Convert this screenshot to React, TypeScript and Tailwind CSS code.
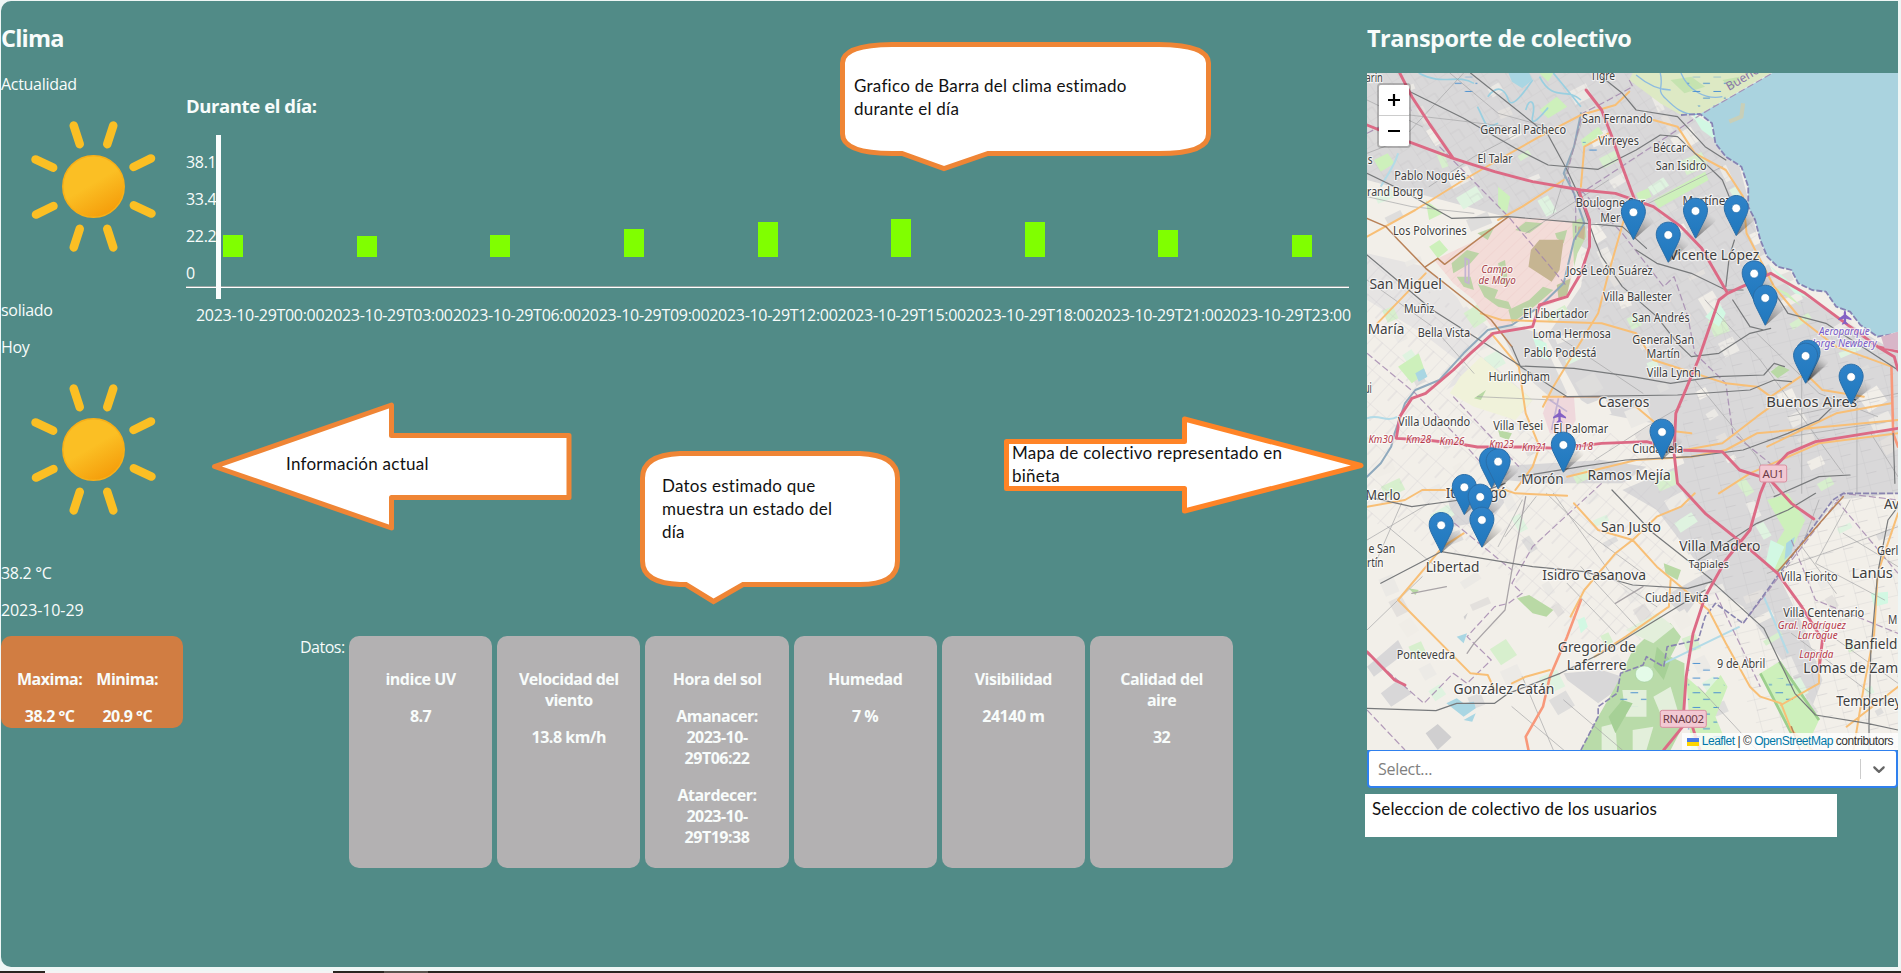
import React from "react";

/* The map is drafted on a 1568-unit-wide sheet: 2.898 units per pixel across, 3 units per pixel down. */
const SX = 2.898;
const SY = 3;
const px = (u: number) => (u - 20) / SX;
const py = (v: number) => (v - 219) / SY;

type Label = [text: string, u0: number, u1: number, v: number, size: number, kind?: "road" | "mil" | "air"];

const labels: Label[] = [
  ["Tigre", 668, 739, 239, 12],
  ["arín", 16, 66, 246, 12],
  ["San Fernando", 643, 848, 368, 12],
  ["General Pacheco", 348, 597, 403, 12],
  ["Virreyes", 690, 808, 436, 12],
  ["Béccar", 849, 945, 455, 12],
  ["El Talar", 340, 442, 490, 12],
  ["San Isidro", 857, 1004, 510, 12],
  ["s", 22, 36, 493, 12],
  ["Pablo Nogués", 99, 306, 539, 12],
  ["rand Bourg", 20, 183, 588, 12],
  ["Boulogne Sur", 625, 826, 622, 12],
  ["Mer", 696, 754, 665, 12],
  ["Martínez", 934, 1074, 614, 12],
  ["Los Polvorines", 95, 309, 704, 12],
  ["Campo", 351, 443, 818, 11.5, "mil"],
  ["de Mayo", 343, 451, 853, 11.5, "mil"],
  ["Vicente López", 896, 1157, 780, 15],
  ["José León Suárez", 598, 848, 825, 12],
  ["San Miguel", 27, 237, 866, 15],
  ["Villa Ballester", 704, 903, 904, 12],
  ["Muñiz", 127, 215, 940, 12],
  ["El Libertador", 472, 662, 954, 12],
  ["San Andrés", 788, 955, 966, 12],
  ["María", 22, 128, 1002, 15],
  ["Bella Vista", 167, 319, 1010, 12],
  ["Loma Hermosa", 500, 727, 1015, 12],
  ["General San", 789, 968, 1031, 12],
  ["Martín", 830, 927, 1075, 12],
  ["Pablo Podestá", 474, 685, 1072, 12],
  ["Villa Lynch", 831, 987, 1132, 12],
  ["Hurlingham", 372, 550, 1144, 12],
  ["Aeroparque", 1330, 1477, 1005, 11, "air"],
  ["Jorge Newbery", 1310, 1497, 1041, 11, "air"],
  ["ui", 12, 34, 1180, 15],
  ["Caseros", 690, 838, 1222, 15],
  ["Buenos Aires", 1177, 1440, 1222, 15],
  ["Villa Udaondo", 110, 319, 1278, 12],
  ["Villa Tesei", 386, 530, 1289, 12],
  ["El Palomar", 560, 719, 1298, 12],
  ["Km30", 24, 96, 1328, 10.5, "road"],
  ["Km28", 133, 206, 1328, 10.5, "road"],
  ["Km26", 230, 302, 1336, 10.5, "road"],
  ["Km23", 374, 446, 1345, 10.5, "road"],
  ["Km21", 469, 540, 1352, 10.5, "road"],
  ["Km18", 600, 675, 1349, 10.5, "road"],
  ["Ciudadela", 789, 936, 1358, 12],
  ["Ramos Mejía", 659, 900, 1441, 15],
  ["Morón", 467, 590, 1452, 15],
  ["Ituzaingó", 248, 425, 1494, 15],
  ["Merlo", 16, 117, 1501, 15],
  ["Av", 1518, 1562, 1527, 15],
  ["San Justo", 698, 872, 1596, 15],
  ["Villa Madero", 925, 1160, 1652, 15],
  ["Tapiales", 952, 1069, 1705, 11.5],
  ["Gerl", 1498, 1560, 1666, 12],
  ["Villa Fiorito", 1218, 1384, 1742, 12],
  ["Lanús", 1424, 1544, 1734, 15],
  ["e San", 24, 102, 1658, 12],
  ["rtín", 20, 68, 1700, 12],
  ["Libertad", 190, 346, 1717, 15],
  ["Isidro Casanova", 528, 829, 1740, 15],
  ["Ciudad Evita", 826, 1010, 1805, 12],
  ["Villa Centenario", 1226, 1461, 1850, 12],
  ["M", 1530, 1557, 1873, 12],
  ["Gral. Rodríguez", 1210, 1408, 1886, 10.5, "road"],
  ["Larroque", 1268, 1384, 1918, 10.5, "road"],
  ["Laprida", 1273, 1372, 1973, 10.5, "road"],
  ["Banfield", 1404, 1557, 1948, 15],
  ["Lomas de Zam", 1284, 1559, 2019, 15],
  ["Pontevedra", 106, 275, 1976, 12],
  ["Gregorio de", 573, 799, 1956, 15],
  ["Laferrere", 599, 772, 2010, 15],
  ["9 de Abril", 1034, 1174, 2005, 12],
  ["González Catán", 271, 563, 2083, 15],
  ["Temperley", 1380, 1568, 2118, 15],
];

const labelFill = { road: "#b5394a", mil: "#a8444c", air: "#7a5cc8", town: "#3f3f3f" };

const pins: [number, number][] = [
  [792, 720], [972, 716], [1090, 708], [893, 788], [1142, 904], [1174, 977],
  [1298, 1142], [1291, 1151], [1423, 1214], [875, 1379], [589, 1418],
  [381, 1465], [400, 1468], [302, 1545], [348, 1574], [353, 1643], [235, 1659],
];

const hashes = Array.from({ length: 190 }, (_, i) => ({
  u: 20 + ((i * 977) % 1500),
  v: 240 + ((i * 1531) % 1960),
  w: 20 + ((i * 37) % 50),
  h: 14 + ((i * 53) % 45),
  r: -34 + ((i * 13) % 14),
  c: ["#f2efe9", "#ebe9e5", "#e3e0dd", "#f0ede7", "#d7efcd", "#eceae6", "#dff3e0", "#dedddc"][i % 8],
}));

function Strokes({ d, c, w, dash, o = 1 }: { d: string; c: string; w: number; dash?: string; o?: number }) {
  return (
    <path d={d} fill="none" stroke={c} strokeWidth={w} strokeOpacity={o} strokeDasharray={dash} strokeLinejoin="round" strokeLinecap={dash ? "butt" : "round"} vectorEffect="non-scaling-stroke" />
  );
}

function MapTerrain() {
  return (
    <svg className="absolute inset-0 h-full w-full" viewBox="20 219 1539 2031" preserveAspectRatio="none">
      <defs>
        <pattern id="streets" width="58" height="64" patternUnits="userSpaceOnUse" patternTransform="rotate(-33)">
          <path d="M0 0H58M0 32H29M0 0V64M29 32V64" stroke="#bdbbbf" strokeWidth="1.5" fill="none" />
        </pattern>
        <pattern id="streets2" width="64" height="80" patternUnits="userSpaceOnUse" patternTransform="rotate(42)">
          <path d="M0 0H64M0 0V80M32 0V40" stroke="#c6c4c8" strokeWidth="1.6" fill="none" />
        </pattern>
        <pattern id="streets3" width="60" height="68" patternUnits="userSpaceOnUse" patternTransform="rotate(-14)">
          <path d="M0 0H60M0 0V68M0 34H30" stroke="#bab8bc" strokeWidth="1.5" fill="none" />
        </pattern>
        <pattern id="range" width="26" height="26" patternUnits="userSpaceOnUse" patternTransform="rotate(45)">
          <path d="M0 0V26" stroke="#eac6c4" strokeWidth="3" />
        </pattern>
        <pattern id="marsh" width="60" height="44" patternUnits="userSpaceOnUse">
          <path d="M4 10H26M34 30H54" stroke="#4a90d0" strokeWidth="3" />
        </pattern>
      </defs>
      <rect x="20" y="219" width="1539" height="2031" fill="#f2efe9" />

      {/* built-up areas */}
      <path d="M20 219H790L1000 380L1100 500L1150 700L1200 830L1400 960L1559 1060V1480L1380 1500L1210 1720L1290 1890L1340 2040L1310 2120L1230 1990L1110 1820L1010 1750L940 1850L880 1790L1000 1720L860 1530L760 1470L940 1390L900 1280L700 1240L640 1200L540 1010L640 860L660 750L560 690L420 650L20 540Z" fill="#d9d8d9" />
      <path d="M20 760L190 800L370 980L250 1170L380 1090L500 1200L470 1240L330 1120L180 1000L20 900Z" fill="#e6e4e3" />
      <path d="M390 960L520 1000L600 1180L560 1200L470 1120Z M30 300L100 380L60 440L20 420Z" fill="#dcdbdb" />
      <path d="M380 1400L700 1380L830 1400L760 1450H520L420 1440Z M250 1470L330 1450L430 1490L380 1560L270 1580Z M590 2020L700 2010L760 2030L730 2080L690 2110L600 2040Z M20 2000L110 1920L130 1960L40 2030Z M60 2080L110 2040L150 2080L90 2120Z M1080 820L1200 850L1150 900Z" fill="#d8d7d8" />
      {hashes.map((h, i) => (
        <rect key={i} x={h.u} y={h.v} width={h.w} height={h.h} fill={h.c} transform={`rotate(${h.r} ${h.u} ${h.v})`} />
      ))}
      <path d="M20 219H790L1000 380L1150 700L1060 1100L900 1120L640 900V740L430 640L20 540Z" fill="url(#streets)" opacity=".7" />
      <path d="M20 760L370 980L480 1300L840 1300L930 1500L900 1850L760 1960L540 1880L440 1730L20 1560Z" fill="url(#streets2)" opacity=".85" />
      <path d="M1050 850L1200 860L1559 1060V2250H1180L960 1700L930 1150Z" fill="url(#streets3)" opacity=".75" />

      {/* green areas */}
      <g fill="#cdf0bb">
        <path d="M520 330L570 290L600 320L545 355Z M40 480L80 460L100 490L60 515Z M520 220L560 219L545 245Z M640 420L690 380L705 400L645 440Z M850 600L1000 515L1010 540L865 625Z M800 580L835 565L845 590L810 605Z" />
        <path d="M190 600L240 640L200 660Z M110 1100L170 1060L190 1120L150 1150Z M1180 850L1240 880L1280 920L1210 870Z M1180 1500L1240 1480L1290 1560L1220 1720L1170 1690L1230 1590Z M400 560L435 590L425 640L400 620Z M200 740L230 720L255 750L225 775Z" />
        <path d="M1160 2020L1215 1985L1330 2160L1290 2250L1250 2200Z M945 2030L1000 2080L1045 2025L1065 2060L1030 2150L1070 2250H960Z" />
      </g>
      <path d="M290 1130L350 1070L430 1140L500 1200L450 1260L330 1220L260 1180Z" fill="#f0f2da" />
      <path d="M1215 1985L1330 2160M1160 2020L1250 2200" stroke="#9ccf8d" strokeWidth="8" />
      <path d="M1000 950L1040 910L1060 940L1040 980Z M630 1860L650 1850L660 1880L640 1900Z M1190 1620L1230 1640L1200 1710L1175 1690Z M960 340L1015 370L1030 420L990 390Z M1180 790L1250 850L1320 900L1260 880Z M1480 1780L1530 1775V1810L1490 1820Z M500 1010L540 1030L545 1080L520 1070Z" fill="#d2f8e3" />
      <path d="M1190 1115L1215 1095L1245 1110L1210 1135Z M400 1290L440 1300L430 1320L405 1310Z M455 1795L490 1785L560 1830L540 1850L500 1840Z M880 1690L930 1710L920 1740L885 1720Z M140 1765L170 1770L160 1785Z M330 1195L365 1170L350 1200Z" fill="#b9d9a5" />
      <path d="M640 2250L690 2150L740 2060L790 1950L860 1880L900 1870L930 1910L900 1970L940 1990L940 2170L900 2250Z" fill="#b9dba9" />
      <path d="M770 1890L860 1840L910 1880L850 1930Z M760 2070H830V2150H770Z M850 2090L900 2060L920 2130L870 2140Z M700 2180L740 2170L745 2250H700Z M790 2190L850 2180L830 2250H790Z" fill="#e3efdb" />
      <path d="M720 2150L760 2100L790 2110L740 2200Z M860 1940L900 1980L880 2040L850 2000Z" fill="#a6d096" />
      <ellipse cx="824" cy="2022" rx="26" ry="24" fill="#e4fbe8" stroke="#8cbf8c" />
      <path d="M950 1920L1060 2060L1030 2150L1060 2250H950Z M1180 2040L1260 2030V2100H1200Z M750 2060H830V2120H750Z" fill="url(#marsh)" />
      <path d="M190 2200L225 2172L265 2212L225 2250Z M300 1850L312 1838L304 1860Z" fill="#d0cfd0" />

      {/* Campo de Mayo */}
      <path d="M215 780L340 719L430 652L520 655L620 665L625 740L610 850L560 910L500 930L440 975L380 980L330 900L270 850Z" fill="#f3dcd8" />
      <path d="M215 780L340 719L430 652L520 655L620 665L625 740L610 850L560 910L500 930L440 975L380 980L330 900L270 850Z" fill="url(#range)" opacity=".6" />
      <path d="M265 790L310 750L345 760L320 790L270 820Z M280 830L320 830L330 870L300 860Z M340 700L390 680L370 720Z M340 850L400 870L390 895L430 905L440 930L400 920L360 890Z M430 930L490 900L530 860L560 870L510 915L440 970Z M450 690L480 665L530 670L490 700Z M565 700L600 690L590 730L570 715Z M400 790L420 780L430 860L410 850Z" fill="#bdd3a6" />
      <path d="M615 665L650 650L655 710L630 760L620 800Z" fill="#c3dcae" />
      <path d="M632 680L652 678L650 720L630 710Z M520 719H590L578 810L555 845L488 800L495 750Z" fill="#c6b592" />
      <path d="M570 855L610 835L600 885L575 895Z" fill="#bfc59a" />
      <path d="M545 1190L620 1190L625 1260L600 1310L550 1300L530 1240Z" fill="#efd8dc" />
      <path d="M550 1200L600 1235M575 1195L555 1290M305 775L315 780V850L305 845Z" stroke="#c4b4d2" strokeWidth="5" fill="none" />

      {/* water */}
      <path d="M790 219H1190L985 342L930 345L870 310L780 240Z" fill="#dde9c4" />
      <path d="M900 240L940 280L1000 260L960 230Z M1050 240L1100 230L1080 270Z" fill="#c5e3b0" />
      <path d="M870 219C880 260 860 270 880 290S930 350 985 342M800 225C840 260 870 270 900 270M930 219C950 270 1000 300 1050 290" stroke="#8dbbe0" strokeWidth="4" fill="none" />
      <path d="M940 230H1060V320H980Z M270 230H340V280H270Z M645 425H700V455H645Z" fill="url(#marsh)" />
      <path d="M1195 219L985 342L1020 370L1030 430L1060 470L1105 500L1125 560L1125 620L1145 660L1160 720L1180 770L1210 800L1250 810L1270 850L1310 870L1350 875L1380 920L1420 935L1450 975L1500 1010L1559 995V219Z" fill="#aad3df" />
      <path d="M1070 365L1105 350L1110 310" stroke="#c8cfb8" strokeWidth="12" fill="none" />
      <path d="M370 290C400 250 420 270 430 300S480 270 500 240M340 320C370 380 360 390 400 370M480 330C490 290 510 300 500 350S560 300 540 330M560 219L640 320M520 230C560 310 600 260 640 300M170 219C240 260 280 219 330 250" stroke="#9acfe0" strokeWidth="5" fill="none" />
      <path d="M430 219H490L500 240L470 265L440 245Z M160 1120L185 1105L195 1130L170 1145Z M250 2110L280 2095L300 2110L330 2105L335 2125L300 2150Z M300 2160L335 2140L325 2165Z M280 1910L310 1900L300 1930Z M1235 1630L1260 1610L1250 1660L1230 1680Z" fill="#a9d6e3" />
      <path d="M20 1255C60 1240 70 1270 110 1250M60 560C80 520 100 500 110 460M1170 1790L1240 1960M880 1990L1100 1880" stroke="#b3dbe7" strokeWidth="6" fill="none" />

      {/* rivers and district limits */}
      <Strokes c="#8fa9bd" w={2} d="M640 340L620 440L590 520L620 580L650 670L620 720L590 850L520 920L440 975L370 990L300 1060L230 1140L160 1170L130 1210L100 1300L90 1340L60 1390L20 1430" />
      <Strokes c="#a083ad" w={1.2} dash="7 3" o={0.8} d="M780 240L790 260L720 300L645 340L600 520L625 600V719M1190 222L985 345L640 580M640 570L760 700L880 860L910 830L950 950L970 1060L1060 1150L1080 1300L1200 1400M20 400L150 330M230 440L430 650L600 860M20 1060L160 1180L300 1330L420 1470M270 1190L460 1400M700 1450L500 1640L440 1750L470 1780L430 1810L390 1820L310 1910L380 1980L310 2050L270 2020L185 2110L20 1960M20 2130L130 2250M1110 1870L1400 1480L1559 1500M250 1550L440 1710M1250 1620L1320 1800L1559 1900M1030 1780L1160 2060M1380 1500L1559 1720" />
      <Strokes c="#8683b4" w={1.8} dash="6 2" d="M930 345L985 342L1020 370L1030 430L1060 470L1105 500L1125 560L1125 620L1145 660L1160 720L1180 770L1210 800L1250 810L1270 850L1310 870L1350 875L1380 920L1420 935L1450 975L1500 1010L1559 1000" />
      <Strokes c="#8984b0" w={1.6} dash="6 2" d="M640 2250L690 2150L690 2120L745 2080L755 2020L820 1995L830 1970L880 2000L890 1940L980 1920L1000 1850L1030 1810L1110 1870L1370 1500L1400 1480L1559 1480" />

      {/* secondary roads */}
      <Strokes c="#a4a4a6" w={0.8} o={0.85} d="M20 590L150 620L330 640M260 219L400 340L540 380M20 300L180 380M100 340L270 360L430 380M200 560L330 470L460 400M480 700L720 540M300 219L120 420L20 460M700 680L1050 500M650 340L560 640M20 840L210 980L330 1120M340 1190L560 1200M560 1000L820 1180M680 1380L830 1280L930 1220M1000 900L1160 1080L1280 1250L1400 1420M970 1140L1150 1370L1200 1480M1150 1000L1330 1180L1500 1250M1240 1250L1559 1180M1180 1320L1559 1260M1280 1130V1480M1440 1200V1480M1480 1300L1559 1430M540 1480L660 1600L820 1720M470 1500L400 1640M510 1490L420 1610M560 1480L740 1740L860 1820M600 1750L740 1900M640 1700L800 1880M980 2060L1150 2250M1330 1500L1280 1640L1380 1780M1420 1500L1320 1690L1520 1800M1400 1600L1559 1700M1180 1720L1400 1640L1559 1580M1260 1830L1559 2050M1250 1900L1480 2080M80 1580L220 1700M20 1620L200 1510M40 1700L120 1510M20 1890L180 1730M470 2030L560 2250M590 2100L760 2250M440 2120L590 2250" />
      <Strokes c="#a9a4a7" w={1.3} d="M480 1490L440 1710L420 1830L330 1930L310 1960M740 1810L820 1760M250 1760L150 1780" />

      {/* primary roads */}
      <Strokes c="#f8bf76" w={2} d="M20 710L160 630L300 540L400 480L520 410L640 345L740 315L780 275M850 360L920 380L970 460L1060 510L1110 590L1120 700L1160 780L1200 860L1280 960L1380 1040L1540 1100M590 540L470 620L400 660M770 640L720 820L690 940L560 1160L530 1220M640 560L650 440L720 400M340 730M190 820L50 970M350 940L410 960L700 970L800 1000L850 1080L940 1110L1060 1150L1150 1160L1190 1190L1290 1120L1340 1170L1460 1190M380 1000L460 1100L480 1240L520 1340L500 1400L450 1470M530 1190L590 1190M800 1220L880 1290L960 1300M940 1350L1050 1330L1150 1250L1190 1220M600 1430L800 1380L960 1370L1060 1350L1150 1300L1559 1260M1040 1480L1130 1420L1330 1330L1559 1300M1180 1340L1380 1240L1540 1210M20 1520L130 1500L180 1470H420L450 1480L600 1487M620 1510L690 1590L790 1620L860 1700L1010 1830L1060 1930L1130 2060L1160 2090L1220 2110L1250 2190L1310 2250M1220 2115L1330 2050V1970M790 1620L740 1660L650 1770L610 1850M790 1620L860 1550L930 1520L970 1480M300 1600L240 1640L110 1800L320 2020L370 2025L390 2070M440 2050L480 2030L550 2010M900 1740L895 1820L770 1910L680 1970M1559 1540L1500 1720L1490 1900L1460 2060L1430 2250M1559 2060L1410 2180" />
      <Strokes c="#b98258" w={1.5} d="M20 655L75 680L110 719L190 805M190 800L225 775L245 793L340 719L430 650M190 805L380 960L440 1040M1400 1490L1340 1560L1210 1715M590 1190L700 1190M1250 2180L1275 2250" />
      <Strokes c="#f8987a" w={2.6} d="M640 1800L600 1910L550 2030L530 2120L480 2210L488 2250M1540 1100L1545 1300L1559 1340" />

      {/* railways */}
      <Strokes c="#77797b" w={1.2} d="M320 219L430 310L545 405L600 510L640 600L680 719L700 770L760 860L860 950L920 1030L960 1070L1040 1060L1130 1000L1190 985M145 275L300 355L450 445L545 495L690 508L800 450L870 405L920 410L980 470L1050 540L1070 590M20 520L120 570L265 655L430 650L600 665L760 680L830 745M700 230L760 280L800 330L920 350L1000 440L1060 480M20 765L210 930L465 1098L620 1105L790 1130L900 1150L1030 1130L1170 1125L1200 1090L1230 1100M800 750L860 790L960 820L1060 870H1110M1060 860L1070 770L1085 720M440 1040L465 1100M465 1100L600 1190L920 1185L1130 1170L1200 1140L1250 1145M1190 860L1240 940L1350 970L1559 1110M460 1430L640 1400L770 1380L960 1370L1110 1350L1240 1300L1330 1260L1370 1220M1080 900L1130 980L1170 990M1200 1490L1330 1430L1420 1425M60 1750L235 1655L500 1700L650 1715L790 1755L950 1765L1020 1745L1170 1885L1260 2080L1320 2145L1470 2170L1559 2190M20 1490L150 1520L290 1500L420 1450M20 2125L220 2132L280 2110L390 2110L430 2080L580 2020L700 1960L1000 1770M730 1470L850 1600L960 1690L1020 1740M980 1680L1090 1610L1150 1570L1240 1530L1320 1480M1559 1520L1530 1560L1500 1720L1480 1960L1475 2160V2250M1545 1300L1550 1450" />

      {/* motorways */}
      <Strokes c="#dc6a85" w={2.9} d="M115 219L150 290L200 370L270 475M20 375L140 425L270 475L390 515L500 545L640 570L740 580L850 620L930 680L990 745L1065 880L1040 900L980 1080L915 1240L910 1360L920 1450L1000 1540L1120 1640L1210 1720L1280 1820L1340 1920L1330 2010M655 270L700 330L730 410L760 500L785 570L800 610M635 575L665 660V740L640 820L600 890L520 915L500 980L385 1000L320 1060L270 1110L190 1180L150 1195L115 1250L105 1315L190 1320L280 1330L340 1341L470 1341L580 1345L700 1330L830 1325L920 1350L1050 1355L1100 1410L1160 1430L1180 1425L1240 1360L1320 1325L1559 1285M1065 880L1190 820L1290 880L1420 980L1500 1040L1548 1070L1559 1110M1180 1430L1160 1480L1130 1590L1060 1680L1000 1790L965 1900L945 2030L935 2180L880 2250M1180 1430L1250 1510L1315 1557M20 1955L100 2040L130 2055M1500 1040L1559 1055M960 2170L985 2250" />
      <path d="M1510 1010L1559 995V1050L1520 1045Z" fill="#d8b6c8" />
    </svg>
  );
}

function Shield({ u, v, w, text }: { u: number; v: number; w: number; text: string }) {
  return (
    <g transform={`translate(${px(u)} ${py(v)})`}>
      <rect width={w} height="17" rx="2" fill="#f2c9d3" stroke="#d98ea0" />
      <text x={w / 2} y="12.5" textAnchor="middle" fontSize="11.5" fill="#6b3a46">{text}</text>
    </g>
  );
}

function Plane({ u, v }: { u: number; v: number }) {
  return (
    <path transform={`translate(${px(u)} ${py(v)})`} fill="#8461c4" d="M0-7C1-7 1.2-5 1.2-3L6.5 1V2.5L1.2 1V4.3L3 6V7L0 6.2L-3 7V6L-1.2 4.3V1L-6.5 2.5V1L-1.2-3C-1.2-5-1-7 0-7Z" />
  );
}

function MapLabels() {
  return (
    <svg className="absolute inset-0 h-full w-full font-['Noto_Sans',sans-serif]" viewBox="0 0 531 677">
      <defs>
        <linearGradient id="pin" x1="0" y1="0" x2="0" y2="1">
          <stop offset="0" stopColor="#2f83c9" />
          <stop offset="1" stopColor="#2078bd" />
        </linearGradient>
        <linearGradient id="shade" x1="0" y1="1" x2="0.6" y2="0">
          <stop offset="0" stopColor="#000" stopOpacity=".6" />
          <stop offset="1" stopColor="#000" stopOpacity="0" />
        </linearGradient>
      </defs>
      <Plane u={1405} v={953} />
      <Plane u={578} v={1248} />
      <text x="362" y="18" fontSize="12" letterSpacing="0" fill="#8a76a8" transform="rotate(-31 362 18)">Buenos</text>
      {labels.map(([t, a, b, v, size, kind], i) => (
        <text
          key={i}
          x={px(a)}
          y={py(v)}
          fontSize={size}
          letterSpacing="0"
          textLength={(b - a) / SX}
          lengthAdjust="spacingAndGlyphs"
          fontStyle={kind ? "italic" : "normal"}
          fill={labelFill[kind ?? "town"]}
          stroke="#fff"
          strokeOpacity=".65"
          strokeWidth="2.4"
          strokeLinejoin="round"
          paintOrder="stroke"
        >
          {t}
        </text>
      ))}
      <Shield u={1158} v={1395} w={27} text="AU1" />
      <Shield u={870} v={2131} w={46} text="RNA002" />
      {pins.map(([u, v], i) => (
        <g key={i} transform={`translate(${px(u) - 12.5} ${py(v) - 41})`}>
          <path d="M12.5 41L22 17C30 12 36 17 32 24Z" fill="url(#shade)" opacity=".75" />
          <path d="M12.5.5C5.9.5.5 5.9.5 12.6c0 3.2 1.3 6.6 2.7 9.4L12.5 40.5 21.8 22c1.4-2.8 2.7-6.2 2.7-9.4C24.500 5.900 19.100.5 12.500.5Z" fill="url(#pin)" stroke="#2a6ea8" />
          <circle cx="12.500" cy="13.300" r="4.300" fill="#fff" stroke="#246ca6" strokeWidth=".6" />
        </g>
      ))}
    </svg>
  );
}

function TransitMap() {
  return (
    <div className="relative h-[677px] w-[531px] overflow-hidden">
      <MapTerrain />
      <MapLabels />
      <div className="absolute top-2.5 left-2.5 flex w-[34px] flex-col overflow-hidden rounded-[4px] border-2 border-black/20 bg-clip-padding">
        <button className="flex h-[31px] items-center justify-center border-b border-[#ccc] bg-white">
          <svg width="14" height="14" viewBox="0 0 14 14"><path d="M7 1V13M1 7H13" stroke="#000" strokeWidth="2.2" /></svg>
        </button>
        <button className="flex h-[30px] items-center justify-center bg-white">
          <svg width="14" height="14" viewBox="0 0 14 14"><path d="M1 7H13" stroke="#000" strokeWidth="2.2" /></svg>
        </button>
      </div>
      <div className="absolute right-0 bottom-0 flex h-[17px] items-center bg-white/80 px-[5px] font-['Liberation_Sans',Arial,sans-serif] text-[12px] leading-[17px] tracking-[-0.46px] whitespace-pre text-[#333]">
        <svg className="mr-[3px]" width="12" height="8" viewBox="0 0 12 8"><path fill="#4c7be1" d="M0 0h12v4H0z" /><path fill="#ffd500" d="M0 4h12v4H0z" /></svg>
        <a className="text-[#0078a8]">Leaflet</a> | © <a className="text-[#0078a8]">OpenStreetMap</a> contributors
      </div>
    </div>
  );
}

function Sun() {
  return (
    <svg className="-mt-px block" width="186" height="186" viewBox="0 0 186 186">
      <defs>
        <linearGradient id="sunFill" x1=".25" y1=".07" x2=".75" y2=".93">
          <stop offset=".45" stopColor="#fbbf24" />
          <stop offset="1" stopColor="#f59e0b" />
        </linearGradient>
      </defs>
      <circle cx="92.500" cy="92.500" r="30.700" fill="url(#sunFill)" stroke="#f8af18" strokeWidth="1.500" />
      {[18, 64, 115, 162, 198, 244, 295, 342].map((a) => (
        <path key={a} d="M92.500 48V28.500" transform={`rotate(${a} 92.500 92.500)`} stroke="#fbbf24" strokeWidth="8.500" strokeLinecap="round" />
      ))}
    </svg>
  );
}

const scale = ["38.1", "33.4", "22.2", "0"];
const bars = [22, 21, 22, 28, 35, 38, 35, 27, 22];
const hours = ["00", "03", "06", "09", "12", "15", "18", "21", "23"];

const cards: { title: string; values: string[] }[] = [
  { title: "indice UV", values: ["8.7"] },
  { title: "Velocidad del viento", values: ["13.8 km/h"] },
  { title: "Hora del sol", values: ["Amanacer: 2023-10-29T06:22", "Atardecer: 2023-10-29T19:38"] },
  { title: "Humedad", values: ["7 %"] },
  { title: "Visibilidad", values: ["24140 m"] },
  { title: "Calidad del aire", values: ["32"] },
];

function DayChart() {
  return (
    <section className="flex-1 pt-[39px]">
      <h3 className="text-[18.500px] leading-[25px] font-bold tracking-[-0.400px]">Durante el día:</h3>
      <div className="mt-[17px] flex h-[164px]">
        <div className="flex w-[30px] flex-col gap-4 pt-[17px]">
          {scale.map((s) => <p key={s}>{s}</p>)}
        </div>
        <div className="w-[5px] bg-[#fafdfd]" />
        <div className="ml-[2px] flex h-[122px] w-[1089px] items-end justify-between">
          {bars.map((h, i) => <div key={i} className="w-5 bg-[#80ff00]" style={{ height: h }} />)}
        </div>
      </div>
      <hr className="-mt-[13px] h-[2px] w-[1163px] border-0 border-t border-[#9aa7a5] bg-white" />
      <div className="mt-[17px] flex w-[1163px] pl-[10px]">
        {hours.map((h) => <p key={h} className="flex-1 whitespace-nowrap">2023-10-29T{h}:00</p>)}
      </div>
    </section>
  );
}

function Callouts() {
  return (
    <div className="font-[Lato,sans-serif] text-[17px] leading-[23px] tracking-[0.250px] text-[#111]">
      <div className="absolute top-[40px] left-[838px] h-[134px] w-[376px] pt-[34px] pl-[16px]">
        <svg className="absolute inset-0" width="376" height="134" viewBox="838 40 376 134">
          <path d="M892 44.500H1159Q1208.500 45 1208.500 63V134Q1208.500 153.500 1159 153.500H988L944 168.500L902 153.500H892Q842.500 153 842.500 134V63Q842.500 45 892 44.500Z" fill="#fff" stroke="#ef8535" strokeWidth="5" />
        </svg>
        <p className="relative w-[300px]">Grafico de Barra del clima estimado durante el día</p>
      </div>
      <div className="absolute top-[449px] left-[638px] h-[158px] w-[265px] pt-[25px] pl-[24px]">
        <svg className="absolute inset-0" width="265" height="158" viewBox="638 449 265 158">
          <path d="M680 453.500H860Q897.500 455 897.500 478V561Q897.500 584.500 860 584.500H743L713.500 601.500L686 584.500H680Q642.500 583 642.500 561V478Q642.500 455 680 453.500Z" fill="#fff" stroke="#ef8535" strokeWidth="5" />
        </svg>
        <p className="relative w-[180px]">Datos estimado que muestra un estado del día</p>
      </div>
      <div className="absolute top-[400px] left-[208px] h-[134px] w-[367px] pt-[52px] pl-[78px]">
        <svg className="absolute inset-0" width="367" height="134" viewBox="208 400 367 134">
          <path d="M214.500 466.500L391.500 405V435.500H569V497.500H391.500V528Z" fill="#fff" stroke="#ef8535" strokeWidth="5" strokeLinejoin="round" />
        </svg>
        <p className="relative">Información actual</p>
      </div>
      <div className="absolute top-[413px] left-[1002px] h-[104px] w-[365px] pt-[28px] pl-[10px]">
        <svg className="absolute inset-0" width="365" height="104" viewBox="1002 413 365 104">
          <path d="M1361 465.500L1184.500 419V441.500H1006.500V488.500H1184.500V511Z" fill="#fff" stroke="#ff8427" strokeWidth="5" strokeLinejoin="round" />
        </svg>
        <p className="relative w-[290px]">Mapa de colectivo representado en biñeta</p>
      </div>
    </div>
  );
}

export default function App() {
  return (
    <div className="relative flex h-[973px] w-[1901px] flex-col overflow-hidden bg-[#eef6f5] font-['Open_Sans','Noto_Sans',sans-serif] text-[16px] leading-[21px] tracking-[-0.300px] text-[#f8fcfb]">
      <main className="mt-px ml-px flex h-[966px] w-[1897px] shrink-0 rounded-l-[10px] bg-[#518b87]">
        <div className="w-[1366px] pt-[21px]">
          <h2 className="text-[23.500px] leading-[32px] font-bold tracking-[-0.8px]">Clima</h2>
          <div className="flex h-[582px]">
            <aside className="w-[185px] pt-5">
              <p>Actualidad</p>
              <Sun />
              <p className="mt-[20px]">soliado</p>
              <p className="mt-4">Hoy</p>
              <Sun />
              <p className="mt-[20px]">38.2 °C</p>
              <p className="mt-4 tracking-[-0.100px]">2023-10-29</p>
            </aside>
            <DayChart />
          </div>
          <div className="flex items-start font-bold tracking-[-0.500px]">
            <div className="flex h-[92px] w-[182px] gap-[14px] rounded-[10px] bg-[#d17d42] pt-[33px] pl-4 text-center">
              <div className="flex flex-col gap-4"><p>Maxima:</p><p>38.2 °C</p></div>
              <div className="flex flex-col gap-4"><p>Minima:</p><p>20.9 °C</p></div>
            </div>
            <p className="ml-[117px] w-[49px] pt-px font-normal">Datos:</p>
            <div className="flex gap-[5px]">
              {cards.map((c) => (
                <div key={c.title} className="flex h-[232px] w-[143.200px] flex-col gap-4 rounded-[10px] bg-[#b3b1b2] px-5 pt-[33px] text-center">
                  <p>{c.title}</p>
                  {c.values.map((v) => <p key={v}>{v}</p>)}
                </div>
              ))}
            </div>
          </div>
        </div>
        <div className="w-[531px] pt-[21px]">
          <h2 className="mb-[19px] text-[23.500px] leading-[32px] font-bold tracking-[-0.500px]">Transporte de colectivo</h2>
          <TransitMap />
          <div className="-mt-px flex h-[39px] w-[531px] items-center rounded-[4px] border-2 border-[#2f80ee] bg-white pl-[9px]">
            <span className="flex-1 pt-0.5 text-[#808080]">Select...</span>
            <span className="h-5 w-px bg-[#ccc]" />
            <svg className="mr-[7px] ml-2" width="20" height="20" viewBox="0 0 20 20"><path fill="#666" d="M4.516 7.548c0.436-0.446 1.043-0.481 1.576 0l3.908 3.747 3.908-3.747c0.533-0.481 1.141-0.446 1.574 0 0.436 0.445 0.408 1.197 0 1.615-0.406 0.418-4.695 4.502-4.695 4.502-0.217 0.223-0.502 0.335-0.787 0.335s-0.570-0.112-0.789-0.335c0 0-4.287-4.084-4.695-4.502s-0.436-1.170 0-1.615z" /></svg>
          </div>
          <p className="mt-[6px] -ml-[2px] h-[43px] w-[472px] bg-white pt-[3px] pl-[7px] font-[Lato,sans-serif] text-[17px] leading-[23px] tracking-[0.150px] text-[#111]">Seleccion de colectivo de los usuarios</p>
        </div>
      </main>
      <footer className="mt-[4px] flex h-[2px] shrink-0 bg-[#2b2620]">
        <div className="ml-[45px] w-[288px] bg-[#f4f4f4]" />
        <div className="ml-[51px] w-[44px] bg-[#5a544e]" />
      </footer>
      <Callouts />
    </div>
  );
}
